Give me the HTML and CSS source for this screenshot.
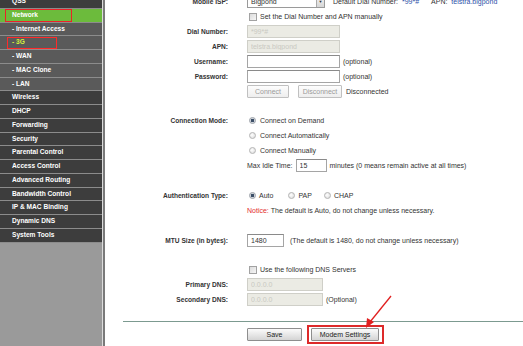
FILE: index.html
```html
<!DOCTYPE html>
<html lang="en">
<head>
  <meta charset="UTF-8">
  <title>3G Settings</title>
  <link rel="stylesheet" href="styles.css">
</head>
<body>

  <div class="layout">
    <div class="sidebar">
      <ul class="menu">
        <li>QSS</li>
        <li class="active"><span class="mark mark-net"></span>Network</li>
        <li class="sub">- Internet Access</li>
        <li class="sub current"><span class="mark mark-3g"></span>- 3G</li>
        <li class="sub">- WAN</li>
        <li class="sub">- MAC Clone</li>
        <li class="sub">- LAN</li>
        <li>Wireless</li>
        <li>DHCP</li>
        <li>Forwarding</li>
        <li>Security</li>
        <li>Parental Control</li>
        <li>Access Control</li>
        <li>Advanced Routing</li>
        <li>Bandwidth Control</li>
        <li>IP &amp; MAC Binding</li>
        <li>Dynamic DNS</li>
        <li>System Tools</li>
      </ul>
    </div>

    <div class="main">
      <div class="form">
        <div class="row">
          <label>Mobile ISP:</label>
          <div class="field">
            <div class="select"><span>Bigpond</span><i class="arrow">&#9660;</i></div>
            <span class="info">Default Dial Number: <b class="blue">*99*#</b></span>
            <span class="info info-apn">APN: <b class="blue">telstra.bigpond</b></span>
          </div>
        </div>
        <div class="row">
          <span></span>
          <div class="field"><span class="check"></span>Set the Dial Number and APN manually</div>
        </div>
        <div class="row">
          <label>Dial Number:</label>
          <div class="field"><input class="wide off" value="*99*#" disabled></div>
        </div>
        <div class="row">
          <label>APN:</label>
          <div class="field"><input class="wide off" value="telstra.bigpond" disabled></div>
        </div>
        <div class="row">
          <label>Username:</label>
          <div class="field"><input class="wide"> (optional)</div>
        </div>
        <div class="row">
          <label>Password:</label>
          <div class="field"><input class="wide" type="password"> (optional)</div>
        </div>
        <div class="row">
          <span></span>
          <div class="field">
            <button class="btn btn-connect" disabled>Connect</button>
            <button class="btn btn-disconnect" disabled>Disconnect</button>
            <span>Disconnected</span>
          </div>
        </div>

        <div class="row gap-mode">
          <label>Connection Mode:</label>
          <div class="field"><span class="radio on"></span>Connect on Demand</div>
        </div>
        <div class="row">
          <span></span>
          <div class="field"><span class="radio"></span>Connect Automatically</div>
        </div>
        <div class="row">
          <span></span>
          <div class="field"><span class="radio"></span>Connect Manually</div>
        </div>
        <div class="row">
          <span></span>
          <div class="field idle">Max Idle Time: <input class="short" value="15"> minutes (0 means remain active at all times)</div>
        </div>

        <div class="row gap-auth">
          <label>Authentication Type:</label>
          <div class="field">
            <span class="opt opt-auto"><span class="radio on"></span>Auto</span>
            <span class="opt opt-pap"><span class="radio"></span>PAP</span>
            <span class="opt"><span class="radio"></span>CHAP</span>
          </div>
        </div>
        <div class="row">
          <span></span>
          <div class="field notice"><span class="red">Notice:</span> The default is Auto, do not change unless necessary.</div>
        </div>

        <div class="row gap-mtu">
          <label>MTU Size (in bytes):</label>
          <div class="field"><input class="mtu" value="1480"><span class="hint">(The default is 1480, do not change unless necessary)</span></div>
        </div>

        <div class="row gap-dns">
          <span></span>
          <div class="field"><span class="check"></span>Use the following DNS Servers</div>
        </div>
        <div class="row">
          <label>Primary DNS:</label>
          <div class="field"><input class="dns off" value="0.0.0.0" disabled></div>
        </div>
        <div class="row">
          <label>Secondary DNS:</label>
          <div class="field"><input class="dns off" value="0.0.0.0" disabled> (Optional)</div>
        </div>
      </div>

      <div class="line"></div>

      <div class="row actions">
        <span></span>
        <div class="field">
          <button class="btn btn-save">Save</button>
          <span class="highlight"><button class="btn btn-modem">Modem Settings</button></span>
        </div>
      </div>
    </div>
  </div>

  <svg class="pointer" width="523" height="346" viewBox="0 0 523 346">
    <line x1="391" y1="296" x2="370" y2="322" stroke="#e02020" stroke-width="1.3"/>
    <polygon points="366,328 367,318 374,322" fill="#e02020"/>
  </svg>

</body>
</html>
```

FILE: styles.css
```css
body {
  margin: 0;
  font-family: "Liberation Sans", Arial, sans-serif;
  font-size: 7px;
  color: #333;
  background: #fff;
  overflow: hidden;
}

.layout {
  display: flex;
  height: 346px;
}

.sidebar {
  width: 102px;
  background: #9a9a9a;
  border-right: 1px solid #dcdcdc;
  flex-shrink: 0;
  overflow: hidden;
}

.menu {
  list-style: none;
  margin: -5px 0 0;
  padding: 0;
}

.menu li {
  position: relative;
  height: 12.75px;
  line-height: 12.75px;
  padding-left: 12px;
  background: #3d3d3d;
  border-bottom: 1px solid #8c8c8c;
  color: #fff;
  font-weight: bold;
  font-size: 6.6px;
  white-space: nowrap;
}

.menu li.sub {
  background: #5a5a5a;
}

.menu li.active {
  background: #6cbb3c;
}

.menu li.current {
  color: #d4f03a;
}

.mark {
  position: absolute;
  z-index: 1;
  box-sizing: border-box;
  border: 1px solid #ec2228;
}

.mark-net {
  left: 5px;
  top: 0;
  width: 67px;
  height: 13px;
}

.mark-3g {
  left: 7px;
  top: 1px;
  width: 50px;
  height: 12px;
  border: 1.5px solid #ff2a2a;
}

.main {
  flex: 1;
  border-left: 2px solid #7a7a7a;
}

.form {
  margin-top: -6px;
}

.row {
  display: grid;
  grid-template-columns: 123px 1fr;
  column-gap: 19px;
  height: 15px;
  align-items: center;
}

.row label {
  text-align: right;
  font-weight: bold;
  font-size: 6.6px;
  color: #333;
}

.field {
  display: flex;
  align-items: center;
  gap: 3px;
  white-space: nowrap;
}

.gap-mode { margin-top: 14px; }
.gap-auth { margin-top: 15px; }
.gap-mtu { margin-top: 15px; }
.gap-dns { margin-top: 14px; }

input {
  box-sizing: border-box;
  height: 13px;
  border: 1px solid #a5a5a5;
  border-top-color: #8a8a8a;
  font-family: inherit;
  font-size: 7px;
  color: #333;
  padding: 0 3px;
  margin: 0;
  background: #fff;
}

input.off {
  background: #ebebe4;
  border-color: #cfcfc8;
  color: #c9c9c2;
}

.wide { width: 93px; }
.short { width: 31px; margin: 0 1px; }
.mtu { width: 37px; }
.dns { width: 76px; }

.select {
  box-sizing: border-box;
  width: 78px;
  height: 13px;
  border: 1px solid #9a9a9a;
  display: flex;
  align-items: center;
  justify-content: space-between;
  padding-left: 3px;
  margin-top: -1px;
}

.select .arrow {
  font-style: normal;
  font-size: 4px;
  width: 7px;
  height: 11px;
  line-height: 11px;
  text-align: center;
  background: linear-gradient(#f4f4f4, #d6d6d6);
  border-left: 1px solid #aaa;
  color: #333;
}

.info {
  margin-left: 5px;
}

.info-apn {
  margin-left: 9px;
}

.blue {
  color: #2d4fa8;
  font-weight: normal;
  margin-left: 2px;
}

.check {
  box-sizing: border-box;
  width: 8px;
  height: 8px;
  border: 1px solid #a2a2a2;
  background: linear-gradient(135deg, #dcdcdc, #f6f6f6);
  margin: 0 0 0 2px;
}

.radio {
  box-sizing: border-box;
  width: 7px;
  height: 7px;
  border-radius: 50%;
  border: 1px solid #b4b4b4;
  background: radial-gradient(circle at 40% 40%, #fff, #d8d8d8);
  margin: 0 1px 0 2px;
}

.radio.on {
  background: radial-gradient(circle, #3a4d66 0, #3a4d66 1.4px, #cfd4da 2px, #e8e8e8 3px);
  border-color: #9aa0a8;
}

.opt {
  display: flex;
  align-items: center;
  gap: 2px;
}

.opt-auto { margin-right: 10px; }
.opt-pap { margin-right: 7px; }

.red {
  color: #e32b2b;
}

.notice {
  gap: 2px;
}

.idle {
  gap: 2px;
}

.hint {
  margin-left: 3px;
}

.btn {
  box-sizing: border-box;
  height: 13px;
  border: 1px solid #8e8e8e;
  border-radius: 1px;
  background: linear-gradient(#fbfbfb, #e6e6e6 55%, #d4d4d4);
  font-family: inherit;
  font-size: 7px;
  color: #222;
  padding: 0;
  margin: 0;
}

.btn:disabled {
  color: #9a9a9a;
  border-color: #c0c0c0;
  background: linear-gradient(#fdfdfd, #eeeeee);
}

.btn-connect { width: 42px; margin-right: 6px; }
.btn-disconnect { width: 44px; margin-right: 1px; }
.btn-save { width: 55px; margin-right: 2px; }
.btn-modem { width: 68px; }

.highlight {
  display: inline-flex;
  border: 2px solid #dd2a2a;
  padding: 1px 3px 1px 2px;
}

.line {
  margin: 14px 0 0 18px;
  border-top: 1px solid #7c9a90;
}

.actions {
  margin-top: 3px;
  height: 19px;
}

.pointer {
  position: absolute;
  left: 0;
  top: 0;
  pointer-events: none;
}
```
